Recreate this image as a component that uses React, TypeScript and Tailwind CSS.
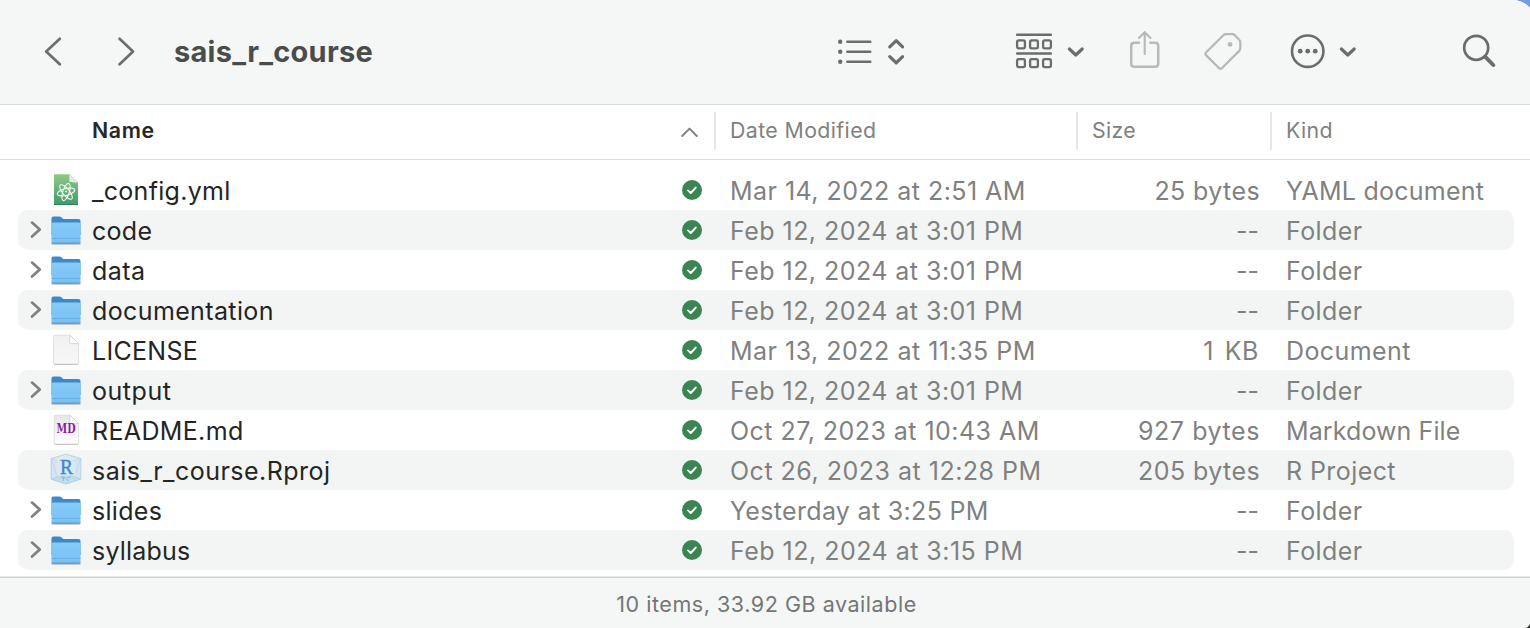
import React from 'react';

type Kind = 'yml' | 'folder' | 'doc' | 'md' | 'rproj';
type Row = {
  name: string;
  date: string;
  size: string;
  kind: string;
  icon: Kind;
  nameCls: string;
  dateCls: string;
  sizeCls: string;
  kindCls: string;
};

const folder = { size: '--', kind: 'Folder', icon: 'folder' as Kind, sizeCls: 'pr-[1px]', kindCls: 'tracking-[0.4px]' };
const feb = { date: 'Feb 12, 2024 at 3:01 PM', dateCls: 'tracking-[0.46px]' };
const nm = 'tracking-[0.3px]';

const rows: Row[] = [
  { name: '_config.yml', date: 'Mar 14, 2022 at 2:51 AM', size: '25 bytes', kind: 'YAML document', icon: 'yml', nameCls: nm, dateCls: 'tracking-[0.46px]', sizeCls: 'tracking-[0.4px]', kindCls: 'tracking-[0.26px]' },
  { name: 'code', nameCls: nm, ...feb, ...folder },
  { name: 'data', nameCls: 'tracking-[0.45px]', ...feb, ...folder },
  { name: 'documentation', nameCls: 'tracking-[0.38px]', ...feb, ...folder },
  { name: 'LICENSE', date: 'Mar 13, 2022 at 11:35 PM', size: '1 KB', kind: 'Document', icon: 'doc', nameCls: nm, dateCls: 'tracking-[0.5px]', sizeCls: 'tracking-[0.6px] [word-spacing:3px] pr-[1px]', kindCls: 'tracking-[0.4px]' },
  { name: 'output', nameCls: 'tracking-[0.55px]', ...feb, ...folder },
  { name: 'README.md', date: 'Oct 27, 2023 at 10:43 AM', size: '927 bytes', kind: 'Markdown File', icon: 'md', nameCls: 'tracking-[0.35px]', dateCls: 'tracking-[0.46px]', sizeCls: 'tracking-[0.58px]', kindCls: 'tracking-[0.1px]' },
  { name: 'sais_r_course.Rproj', date: 'Oct 26, 2023 at 12:28 PM', size: '205 bytes', kind: 'R Project', icon: 'rproj', nameCls: 'tracking-[0.48px]', dateCls: 'tracking-[0.5px]', sizeCls: 'tracking-[0.42px]', kindCls: 'tracking-[0.42px]' },
  { name: 'slides', nameCls: nm, date: 'Yesterday at 3:25 PM', dateCls: 'tracking-[0.32px]', ...folder },
  { name: 'syllabus', nameCls: 'tracking-[0.2px]', date: 'Feb 12, 2024 at 3:15 PM', dateCls: 'tracking-[0.48px]', ...folder },
];

function FileIcon({ kind }: { kind: Kind }) {
  if (kind === 'folder')
    return (
      <svg width="32" height="32" viewBox="0 0 32 32" className="relative top-px">
        <defs>
          <linearGradient id="ff" x1="0" y1="0" x2="0" y2="1">
            <stop offset="0" stopColor="#86cbf8" />
            <stop offset="1" stopColor="#78c0f1" />
          </linearGradient>
        </defs>
        <rect x="1.2" y="27" width="29.6" height="2.8" rx="1.4" fill="#000" opacity=".25" />
        <path d="M1.5 3.5Q1.5 1.6 3.4 1.6H9.4Q10.6 1.6 11.6 2.5L12.8 3.5Q13.6 4.1 14.8 4.1H28.5Q30.5 4.1 30.5 6.1V20H1.5Z" fill="#3f89c7" />
        <path d="M1.5 8.9Q1.5 7.4 3 7.4H29Q30.5 7.4 30.5 8.9V27Q30.5 28.5 28.8 28.5H3.2Q1.5 28.5 1.5 27Z" fill="url(#ff)" />
        <path d="M1.5 23.5H30.5" stroke="#64aee2" strokeWidth=".9" />
        <path d="M2 27.7Q2.5 28.2 3.4 28.2H28.6Q29.5 28.2 30 27.7" stroke="#4c93c9" strokeWidth="1" fill="none" />
      </svg>
    );
  if (kind === 'yml')
    return (
      <svg width="32" height="32" viewBox="0 0 32 32">
        <defs>
          <linearGradient id="yy" x1="0" y1="0" x2="0" y2="1">
            <stop offset="0" stopColor="#93c885" />
            <stop offset="1" stopColor="#3f9b6c" />
          </linearGradient>
        </defs>
        <path d="M4 0.2H19.5L28 8.5V31H4Z" fill="url(#yy)" />
        <path d="M4 30.6H28" stroke="#2f7d58" strokeWidth=".9" />
        <path d="M19.3 0.2L28 8.7L19.3 7.8Z" fill="#e2ece4" />
        <g fill="none" stroke="#f3fbf5" strokeWidth="1.1">
          <ellipse cx="16" cy="18" rx="9" ry="3.4" transform="rotate(-14 16 18)" />
          <ellipse cx="16" cy="18" rx="9" ry="3.4" transform="rotate(50 16 18)" />
          <ellipse cx="16" cy="18" rx="9" ry="3.2" transform="rotate(108 16 18)" />
        </g>
        <circle cx="16" cy="17.6" r="1" fill="#fff" />
      </svg>
    );
  if (kind === 'rproj')
    return (
      <svg width="32" height="32" viewBox="0 0 32 32">
        <path d="M16 0.3L30.8 4.6V25L16 30L1.2 25V4.6Z" fill="#d3e5f1" stroke="#a8cde0" strokeWidth=".8" />
        <path d="M1.2 4.6L16 8.8L30.8 4.6L16 .3Z" fill="#dfeaf1" stroke="#b4d2e2" strokeWidth=".7" />
        <path d="M16 20L1.2 25L16 30L30.8 25Z" fill="#c2deed" stroke="#a8cde0" strokeWidth=".6" />
        <path d="M1.2 4.6L7 22M30.8 4.6L25 22" stroke="#b4d5e6" strokeWidth=".7" />
        <path d="M6.5 5.5L25 5.5L25.5 22L7 22Z" fill="#e0eaf2" opacity=".6" />
        <text x="16.4" y="20.3" textAnchor="middle" fontFamily="Liberation Serif, serif" fontSize="22" fill="#3d87d2" stroke="#3d87d2" strokeWidth=".4" textLength="13" lengthAdjust="spacingAndGlyphs">R</text>
        <path d="M11 23.2H15M17 23.2H21M13.3 23.2V27M15 23.4L18.5 27" stroke="#82b4da" strokeWidth="1" fill="none" />
      </svg>
    );
  const left = kind === 'md' ? 4.3 : 3.5;
  return (
    <svg width="32" height="32" viewBox="0 0 32 32">
      <defs>
        <linearGradient id={'p' + kind} x1="0" y1="0" x2="0" y2="1">
          <stop offset="0" stopColor={kind === 'md' ? '#e6e6e6' : '#f1f1f1'} />
          <stop offset="1" stopColor={kind === 'md' ? '#ffffff' : '#f7f7f7'} />
        </linearGradient>
      </defs>
      <path d={`M${left} 2.6Q${left} 1.2 ${left + 1.4} 1.2H19.8L28.6 9.6V29Q28.6 30.2 27.4 30.2H${left + 1.2}Q${left} 30.2 ${left} 29Z`} fill={`url(#p${kind})`} stroke="#dadada" strokeWidth=".8" />
      <path d={`M${left + 0.6} 30.4H28`} stroke="#b9b9b9" strokeWidth=".8" />
      <path d="M19.8 1.2L28.6 9.6H21.1Q19.8 9.6 19.8 8.3Z" fill="#fff" stroke="#cccccc" strokeWidth=".7" />
      {kind === 'md' && (
        <text x="16" y="18.6" textAnchor="middle" fontFamily="DejaVu Serif, serif" fontWeight="bold" fontSize="12" textLength="19" lengthAdjust="spacingAndGlyphs" fill="#8e1c9c">MD</text>
      )}
    </svg>
  );
}

const Chevron = () => (
  <svg width="17" height="10" viewBox="0 0 17 10">
    <path d="M2.4 2L8.8 8L15.2 2" fill="none" stroke="#6a6d6b" strokeWidth="3.1" strokeLinecap="round" strokeLinejoin="round" />
  </svg>
);

function Toolbar() {
  return (
    <header className="flex h-[105px] w-[1530px] shrink-0 items-center border-b border-[#d8dad9] bg-[#f5f7f6] pb-px">
      <svg width="20" height="30" viewBox="0 0 20 30" className="ml-[43px]" fill="none" stroke="#6b6e6c" strokeWidth="2.7" strokeLinecap="round" strokeLinejoin="round">
        <path d="M16.8 1.7L3.2 14.5L16.8 27.3" />
      </svg>
      <svg width="20" height="30" viewBox="0 0 20 30" className="ml-[53px]" fill="none" stroke="#6b6e6c" strokeWidth="2.7" strokeLinecap="round" strokeLinejoin="round">
        <path d="M3.6 1.7L17 14.5L3.6 27.3" />
      </svg>
      <h1 className="ml-[38px] w-[662px] text-[29px] leading-[36px] font-bold tracking-[0.24px] whitespace-nowrap text-[#4b4d4c]">sais_r_course</h1>
      <svg width="68" height="30" viewBox="0 0 68 30" className="shrink-0" fill="none" stroke="#6a6d6b" strokeLinecap="round" strokeLinejoin="round">
        <g fill="#6a6d6b" stroke="none">
          <circle cx="4.2" cy="4.8" r="2.2" />
          <circle cx="4.2" cy="14.8" r="2.2" />
          <circle cx="4.2" cy="24.8" r="2.2" />
        </g>
        <path d="M11.4 4.8H34.2M11.4 14.8H34.2M11.4 24.8H34.2" strokeWidth="2.6" />
        <path d="M53.8 9.8L60.2 3.7L66.6 9.8M53.8 19.6L60.2 25.8L66.6 19.6" strokeWidth="3.2" />
      </svg>
      <svg width="38" height="38" viewBox="0 0 38 38" className="mb-[2px] ml-[111px] shrink-0" fill="none" stroke="#6a6d6b" strokeLinecap="round">
        <path d="M2.2 2.7H35.8M2.2 21.5H35.8" strokeWidth="2.6" />
        <g strokeWidth="2.3">
          <rect x="2.1" y="8.3" width="7.8" height="8" rx="1.6" />
          <rect x="15.1" y="8.3" width="7.8" height="8" rx="1.6" />
          <rect x="28.1" y="8.3" width="7.8" height="8" rx="1.6" />
          <rect x="2.1" y="27.1" width="7.8" height="8" rx="1.6" />
          <rect x="15.1" y="27.1" width="7.8" height="8" rx="1.6" />
          <rect x="28.1" y="27.1" width="7.8" height="8" rx="1.6" />
        </g>
      </svg>
      <div className="ml-[14px] shrink-0"><Chevron /></div>
      <svg width="32" height="40" viewBox="0 0 32 40" className="mb-[4px] ml-[44px] shrink-0" fill="none" stroke="#b6b9b7" strokeWidth="2.5" strokeLinecap="round" strokeLinejoin="round">
        <path d="M11 12.7H6.2Q3.2 12.7 3.2 15.7V33.8Q3.2 36.8 6.2 36.8H27.2Q30.2 36.8 30.2 33.8V15.7Q30.2 12.7 27.2 12.7H22.4" />
        <path d="M16.7 24V2.4M10.9 8L16.7 2.2L22.5 8" strokeWidth="2.1" />
      </svg>
      <svg width="40" height="40" viewBox="0 0 40 40" className="mb-[2px] ml-[43px] shrink-0" fill="none" stroke="#b6b9b7" strokeWidth="2.3" strokeLinecap="round" strokeLinejoin="round">
        <path d="M20.4 4.3Q21.5 3.2 23.1 3.2H29.4Q30.8 3.2 31.8 4.2L36.2 8.8Q37.3 9.9 37.3 11.5V17.3Q37.3 18.8 36.2 19.9L19.1 37Q17.5 38.6 15.9 37L3.2 24.4Q1.6 22.8 3.2 21.2Z" />
        <circle cx="27" cy="13.4" r="2.4" fill="#b6b9b7" stroke="none" />
      </svg>
      <svg width="36" height="36" viewBox="0 0 36 36" className="ml-[47px] shrink-0">
        <circle cx="17.7" cy="17.2" r="15.7" fill="none" stroke="#6a6d6b" strokeWidth="2.6" />
        <g fill="#6a6d6b">
          <circle cx="10.2" cy="17.2" r="2.4" />
          <circle cx="17.7" cy="17.2" r="2.4" />
          <circle cx="25.2" cy="17.2" r="2.4" />
        </g>
      </svg>
      <div className="ml-[13px] shrink-0"><Chevron /></div>
      <svg width="36" height="36" viewBox="0 0 36 36" className="ml-[104px] shrink-0" fill="none" stroke="#6a6d6b" strokeLinecap="round">
        <circle cx="16.2" cy="13.8" r="12" strokeWidth="2.7" />
        <path d="M25.3 22.9L33.3 31" strokeWidth="3.9" />
      </svg>
    </header>
  );
}

function ColumnHeads() {
  return (
    <div className="flex h-[55px] w-[1530px] shrink-0 items-center border-b border-[#dcdedd] bg-white pb-[3px] text-[21.3px] text-[#7f8180]">
      <div className="flex w-[714px] items-center justify-between pr-[16px] pl-[92px]">
        <span className="font-semibold tracking-[0.65px] text-[#262827]">Name</span>
        <svg width="18" height="12" viewBox="0 0 18 12" className="mt-[2px]">
          <path d="M2.2 10L9.5 2.6L16.8 10" fill="none" stroke="#7f8180" strokeWidth="1.9" strokeLinecap="round" strokeLinejoin="round" />
        </svg>
      </div>
      <div className="flex h-[38px] w-[362px] items-center border-l-2 border-[#e4e5e4] pl-[14px] tracking-[0.4px]"><span>Date Modified</span></div>
      <div className="flex h-[38px] w-[194px] items-center border-l-2 border-[#e4e5e4] pl-[14px] tracking-[0.35px]"><span>Size</span></div>
      <div className="flex h-[38px] items-center border-l-2 border-[#e4e5e4] pl-[14px] tracking-[0.35px]"><span>Kind</span></div>
    </div>
  );
}

function FileRow({ row }: { row: Row }) {
  return (
    <li className="flex h-[40px] items-center rounded-[10px] text-[25px] leading-[38px] whitespace-nowrap text-[#7f8180] even:bg-[#f3f5f4]">
      <div className="w-[32px] pl-[11px]">
        {row.icon === 'folder' && (
          <svg width="14" height="20" viewBox="0 0 14 20">
            <path d="M3 2.6L10.8 9.6L3 16.6" fill="none" stroke="#7f8180" strokeWidth="2.7" strokeLinecap="round" strokeLinejoin="round" />
          </svg>
        )}
      </div>
      <FileIcon kind={row.icon} />
      <span className={`mt-[2px] ml-[10px] w-[590px] text-[#232524] ${row.nameCls}`}>{row.name}</span>
      <svg width="20" height="20" viewBox="0 0 20 20" className="shrink-0">
        <circle cx="10" cy="10" r="10" fill="#3a8552" />
        <path d="M6 10.4L8.8 13L13.8 7.6" fill="none" stroke="#fff" strokeWidth="1.9" strokeLinecap="round" strokeLinejoin="round" />
      </svg>
      <span className={`mt-[2px] ml-[28px] w-[349px] ${row.dateCls}`}>{row.date}</span>
      <span className={`mt-[2px] w-[181px] text-right ${row.sizeCls}`}>{row.size}</span>
      <span className={`mt-[2px] ml-[26px] ${row.kindCls}`}>{row.kind}</span>
    </li>
  );
}

export default function App() {
  return (
    <div className="relative h-[628px] w-[1530px] overflow-hidden bg-[#6f9de0] font-[Inter,sans-serif]">
      <div className="flex h-[628px] w-[1535px] flex-col overflow-hidden rounded-tr-[22px] bg-white">
        <Toolbar />
        <ColumnHeads />
        <ul className="flex h-[416px] w-[1514px] shrink-0 flex-col pt-[10px] pl-[18px]">
          {rows.map((r) => (
            <FileRow key={r.name} row={r} />
          ))}
        </ul>
        <div className="h-px w-[1530px] shrink-0 bg-[#e6e7e6]" />
        <footer className="flex w-[1530px] grow items-center justify-center border-t border-[#cfd1d0] bg-[#f5f7f6] text-[21.5px] tracking-[0.54px] text-[#747675]">
          <span className="mt-[2px] ml-[3px]">10 items, 33.92 GB available</span>
        </footer>
      </div>
      <svg width="4" height="4" viewBox="0 0 4 4" className="absolute right-0 bottom-0">
        <path d="M4 0V4H0Q2.5 3 4 0Z" fill="#2c3024" />
      </svg>
    </div>
  );
}
